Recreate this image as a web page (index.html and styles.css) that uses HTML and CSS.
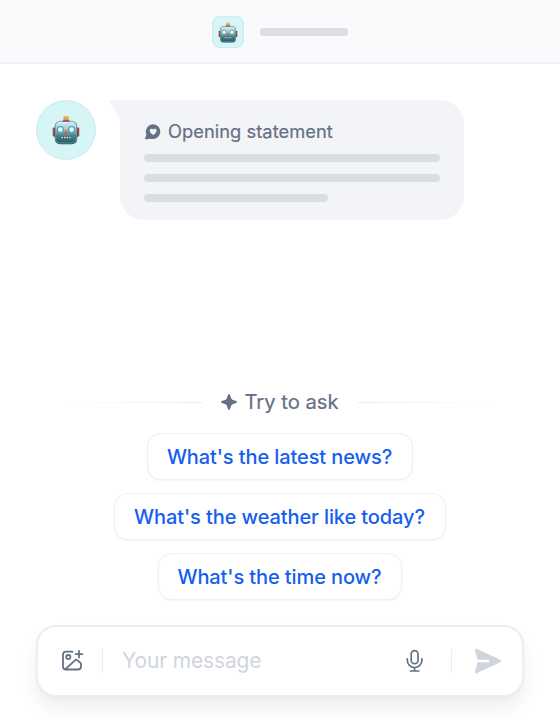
FILE: index.html
```html
<!DOCTYPE html>
<html lang="en">
<head>
<meta charset="utf-8">
<title>Chat preview</title>
<link rel="stylesheet" href="styles.css">
</head>
<body>
<svg class="defs" width="0" height="0" aria-hidden="true">
  <defs>
    <linearGradient id="head" x1="0" y1="0" x2="0" y2="1">
      <stop offset="0" stop-color="#e2f0f0"/><stop offset=".35" stop-color="#a9c9cd"/><stop offset=".65" stop-color="#4d858f"/><stop offset="1" stop-color="#1d5c69"/>
    </linearGradient>
    <symbol id="robot" viewBox="0 0 28 30">
      <rect x="0.7" y="12.5" width="3.6" height="9" rx="1.2" fill="#a84b54"/>
      <rect x="23.7" y="12.5" width="3.6" height="9" rx="1.2" fill="#a84b54"/>
      <rect x="2.2" y="14" width="1.2" height="8" fill="#6b3442"/>
      <rect x="24.6" y="14" width="1.2" height="8" fill="#6b3442"/>
      <rect x="11.3" y="1" width="5.4" height="4.1" rx="1.8" fill="#f39b1d"/>
      <rect x="12.8" y="1.4" width="2.2" height="1.6" rx=".8" fill="#ffd65a"/>
      <rect x="2.9" y="6.4" width="22.2" height="22.8" rx="5" fill="#244f5b"/>
      <rect x="3.3" y="6.3" width="21.4" height="21.7" rx="4.6" fill="url(#head)" stroke="#789da3" stroke-width=".8"/>
      <path d="M10.8 6.8V4.8h6.6v2z" fill="#76609b"/>
      <circle cx="8.4" cy="14.6" r="3" fill="#f6ffff" stroke="#35adc5" stroke-width="1.3"/>
      <circle cx="19.6" cy="14.6" r="3" fill="#f6ffff" stroke="#35adc5" stroke-width="1.3"/>
      <path d="M14 14.8l2.2 4.2h-4.4z" fill="#e2574f"/>
      <rect x="8.5" y="21" width="11" height="3" rx="1" fill="#475d66"/>
      <path d="M9.5 22.5h9.4" stroke="#e8eeee" stroke-width="1.6" stroke-dasharray="1.5 1.1"/>
    </symbol>
  </defs>
</svg>
<div class="app">
  <header class="topbar">
    <span class="app-icon"><svg class="robot-small"><use href="#robot"/></svg></span>
    <span class="line line-title"></span>
  </header>
  <main class="chat">
    <section class="message">
      <span class="avatar"><svg class="robot"><use href="#robot"/></svg></span>
      <svg class="tail" width="12" height="20" viewBox="0 0 12 20"><path d="M.8 0H12v18.2L1.2 1.5Q.2 0 .8 0z" fill="#f2f4f7"/></svg>
      <div class="bubble">
        <div class="bubble-title">
          <svg width="17" height="16" viewBox="0 0 17 16"><path fill="#667085" fill-rule="evenodd" d="M9.2.3a7.4 7.4 0 1 1-2.7 14.4L1.9 15.3Q.7 15.4 1.1 14.3L2.4 10.8A7.5 7.5 0 0 1 9.2.3zM9.2 5.5C8.3 4.1 5.7 4.6 5.8 6.8c.1 1.9 2.1 3.3 3.4 4.2 1.3-.9 3.3-2.3 3.4-4.2.1-2.2-2.5-2.7-3.4-1.3z"/></svg>
          <span class="label-text">Opening statement</span>
        </div>
        <span class="line"></span>
        <span class="line"></span>
        <span class="line line-short"></span>
      </div>
    </section>
    <section class="suggestions">
      <div class="divider">
        <span class="rule rule-left"></span>
        <span class="divider-label">
          <svg width="16" height="16" viewBox="0 0 16 16"><path fill="#667085" d="M8 0Q8.6 0 8.9.8L10.3 4.5Q10.6 5.4 11.5 5.7L15.2 7.1Q16 7.4 16 8T15.2 8.9L11.5 10.3Q10.6 10.6 10.3 11.5L8.9 15.2Q8.6 16 8 16T7.1 15.2L5.7 11.5Q5.4 10.6 4.5 10.3L.8 8.9Q0 8.6 0 8T.8 7.1L4.5 5.7Q5.4 5.4 5.7 4.5L7.1.8Q7.4 0 8 0z"/></svg>
          <span class="label-text">Try to ask</span>
        </span>
        <span class="rule rule-right"></span>
      </div>
      <button class="ask ask-news">What's the latest news?</button>
      <button class="ask ask-weather">What's the weather like today?</button>
      <button class="ask ask-time">What's the time now?</button>
    </section>
    <section class="composer">
      <svg class="image-icon" width="24" height="24" viewBox="0 0 24 24" fill="none" stroke="#667085" stroke-width="1.8" stroke-linecap="round" stroke-linejoin="round"><path d="M12.5 2.7H6A3 3 0 0 0 3 5.7V17.5a3 3 0 0 0 3 3H18a3 3 0 0 0 3-3v-2.2q0-.9-.7-1.5L17 11.1q-.9-.8-1.8 0L5.5 20.2M19 1.9v6.6M15.7 5.2h6.6"/><circle cx="8.3" cy="8.1" r="2.1"/></svg>
      <span class="separator"></span>
      <span class="placeholder">Your message</span>
      <svg class="mic" width="24" height="24" viewBox="0 0 24 24" fill="none" stroke="#667085" stroke-width="1.7" stroke-linecap="round" stroke-linejoin="round"><rect x="8.2" y="1.6" width="6.8" height="13" rx="3.4"/><path d="M4.3 9.8v1.5a7.3 7.3 0 0 0 14.6 0V9.8M11.6 18.6v3.3M7.4 22h8.4"/></svg>
      <span class="separator"></span>
      <svg class="send" width="28" height="26" viewBox="0 0 28 26"><path fill="#d0d5dd" d="M1 2.7C.7 1.3 1.9.3 3.2.9l23 10.9q2.2 1.2 0 2.4l-23 10.9C1.9 25.7.7 24.7 1 23.3L3.6 14.2H14.2a1.2 1.2 0 0 0 0-2.4H3.6z"/></svg>
    </section>
  </main>
</div>
</body>
</html>
```

FILE: styles.css
```css
* { box-sizing: border-box; }
body { margin: 0; background: #fff; font-family: Inter, "Liberation Sans", sans-serif; color: #667085; }
svg { display: block; flex: none; }
.defs { position: absolute; }
.app { width: 560px; height: 720px; overflow: hidden; display: flex; flex-direction: column; }
.topbar { height: 64px; flex: none; display: flex; align-items: center; justify-content: center; gap: 16px; background: #f8fafc; border-bottom: 2px solid #f0f2f6; }
.app-icon { width: 32px; height: 32px; margin-top: 1px; border-radius: 8px; background: #d5f5f6; border: 1px solid #cceced; display: flex; align-items: center; justify-content: center; }
.robot-small { width: 20px; height: 21px; margin-top: 1px; }
.line { display: block; height: 8px; border-radius: 4px; background: #dcdee2; }
.line-title { width: 88px; margin-top: 1px; }
.chat { flex: 1; display: flex; flex-direction: column; padding: 36px 36px 23px; }
.message { display: flex; height: 120px; }
.avatar { width: 60px; height: 60px; border-radius: 50%; background: #d5f5f6; border: 1px solid #cceced; display: flex; align-items: center; justify-content: center; }
.robot { width: 28px; height: 30px; }
.tail { margin-left: 12px; }
.bubble { width: 344px; height: 120px; border-radius: 0 24px 24px 24px; background: #f2f4f7; padding: 21px 24px 17px; display: flex; flex-direction: column; gap: 12px; }
.bubble-title { height: 21px; display: flex; align-items: center; gap: 7px; font-size: 18.3px; letter-spacing: .04px; white-space: nowrap; }
.label-text { padding-bottom: 2px; -webkit-text-stroke: .2px #667085; }
.bubble .line { width: 296px; background: #dadde1; }
.bubble .line-short { width: 184px; }
.suggestions { margin-top: 166px; display: flex; flex-direction: column; align-items: center; }
.divider { display: flex; align-items: center; gap: 19px; height: 32px; margin-bottom: 15px; }
.rule { width: 140px; height: 1px; }
.rule-left { background: linear-gradient(90deg, #fff, #eaecf0); }
.rule-right { background: linear-gradient(270deg, #fff, #eaecf0); }
.divider-label { display: flex; align-items: center; gap: 7px; font-size: 20.2px; white-space: nowrap; }
.ask { height: 47px; margin-bottom: 13px; padding: 0 1px 0 0; border: 1px solid #eef0f3; border-radius: 14px; background: #fff; box-shadow: 0 1px 2px rgba(16, 24, 40, .05); font: 500 20px Inter, "Liberation Sans", sans-serif; letter-spacing: -.1px; color: #155eef; white-space: nowrap; }
.ask-news { width: 266px; }
.ask-weather { width: 332px; }
.ask-time { width: 244px; }
.composer { margin-top: auto; flex: none; height: 72px; border: 2px solid #eceef2; border-radius: 20px; background: #fff; box-shadow: 0 12px 20px -2px rgba(16, 24, 40, .08), 0 3px 8px -2px rgba(16, 24, 40, .03); display: flex; align-items: center; padding: 0 20px 0 22px; }
.separator { width: 1px; height: 24px; background: #eaecf0; }
.image-icon { margin-right: 18px; }
.placeholder { margin-left: 19px; flex: 1; padding-bottom: 1px; font-size: 21px; letter-spacing: -.15px; color: #d0d5dd; }
.mic { margin-right: 24px; }
.send { margin-left: 22px; }
```
